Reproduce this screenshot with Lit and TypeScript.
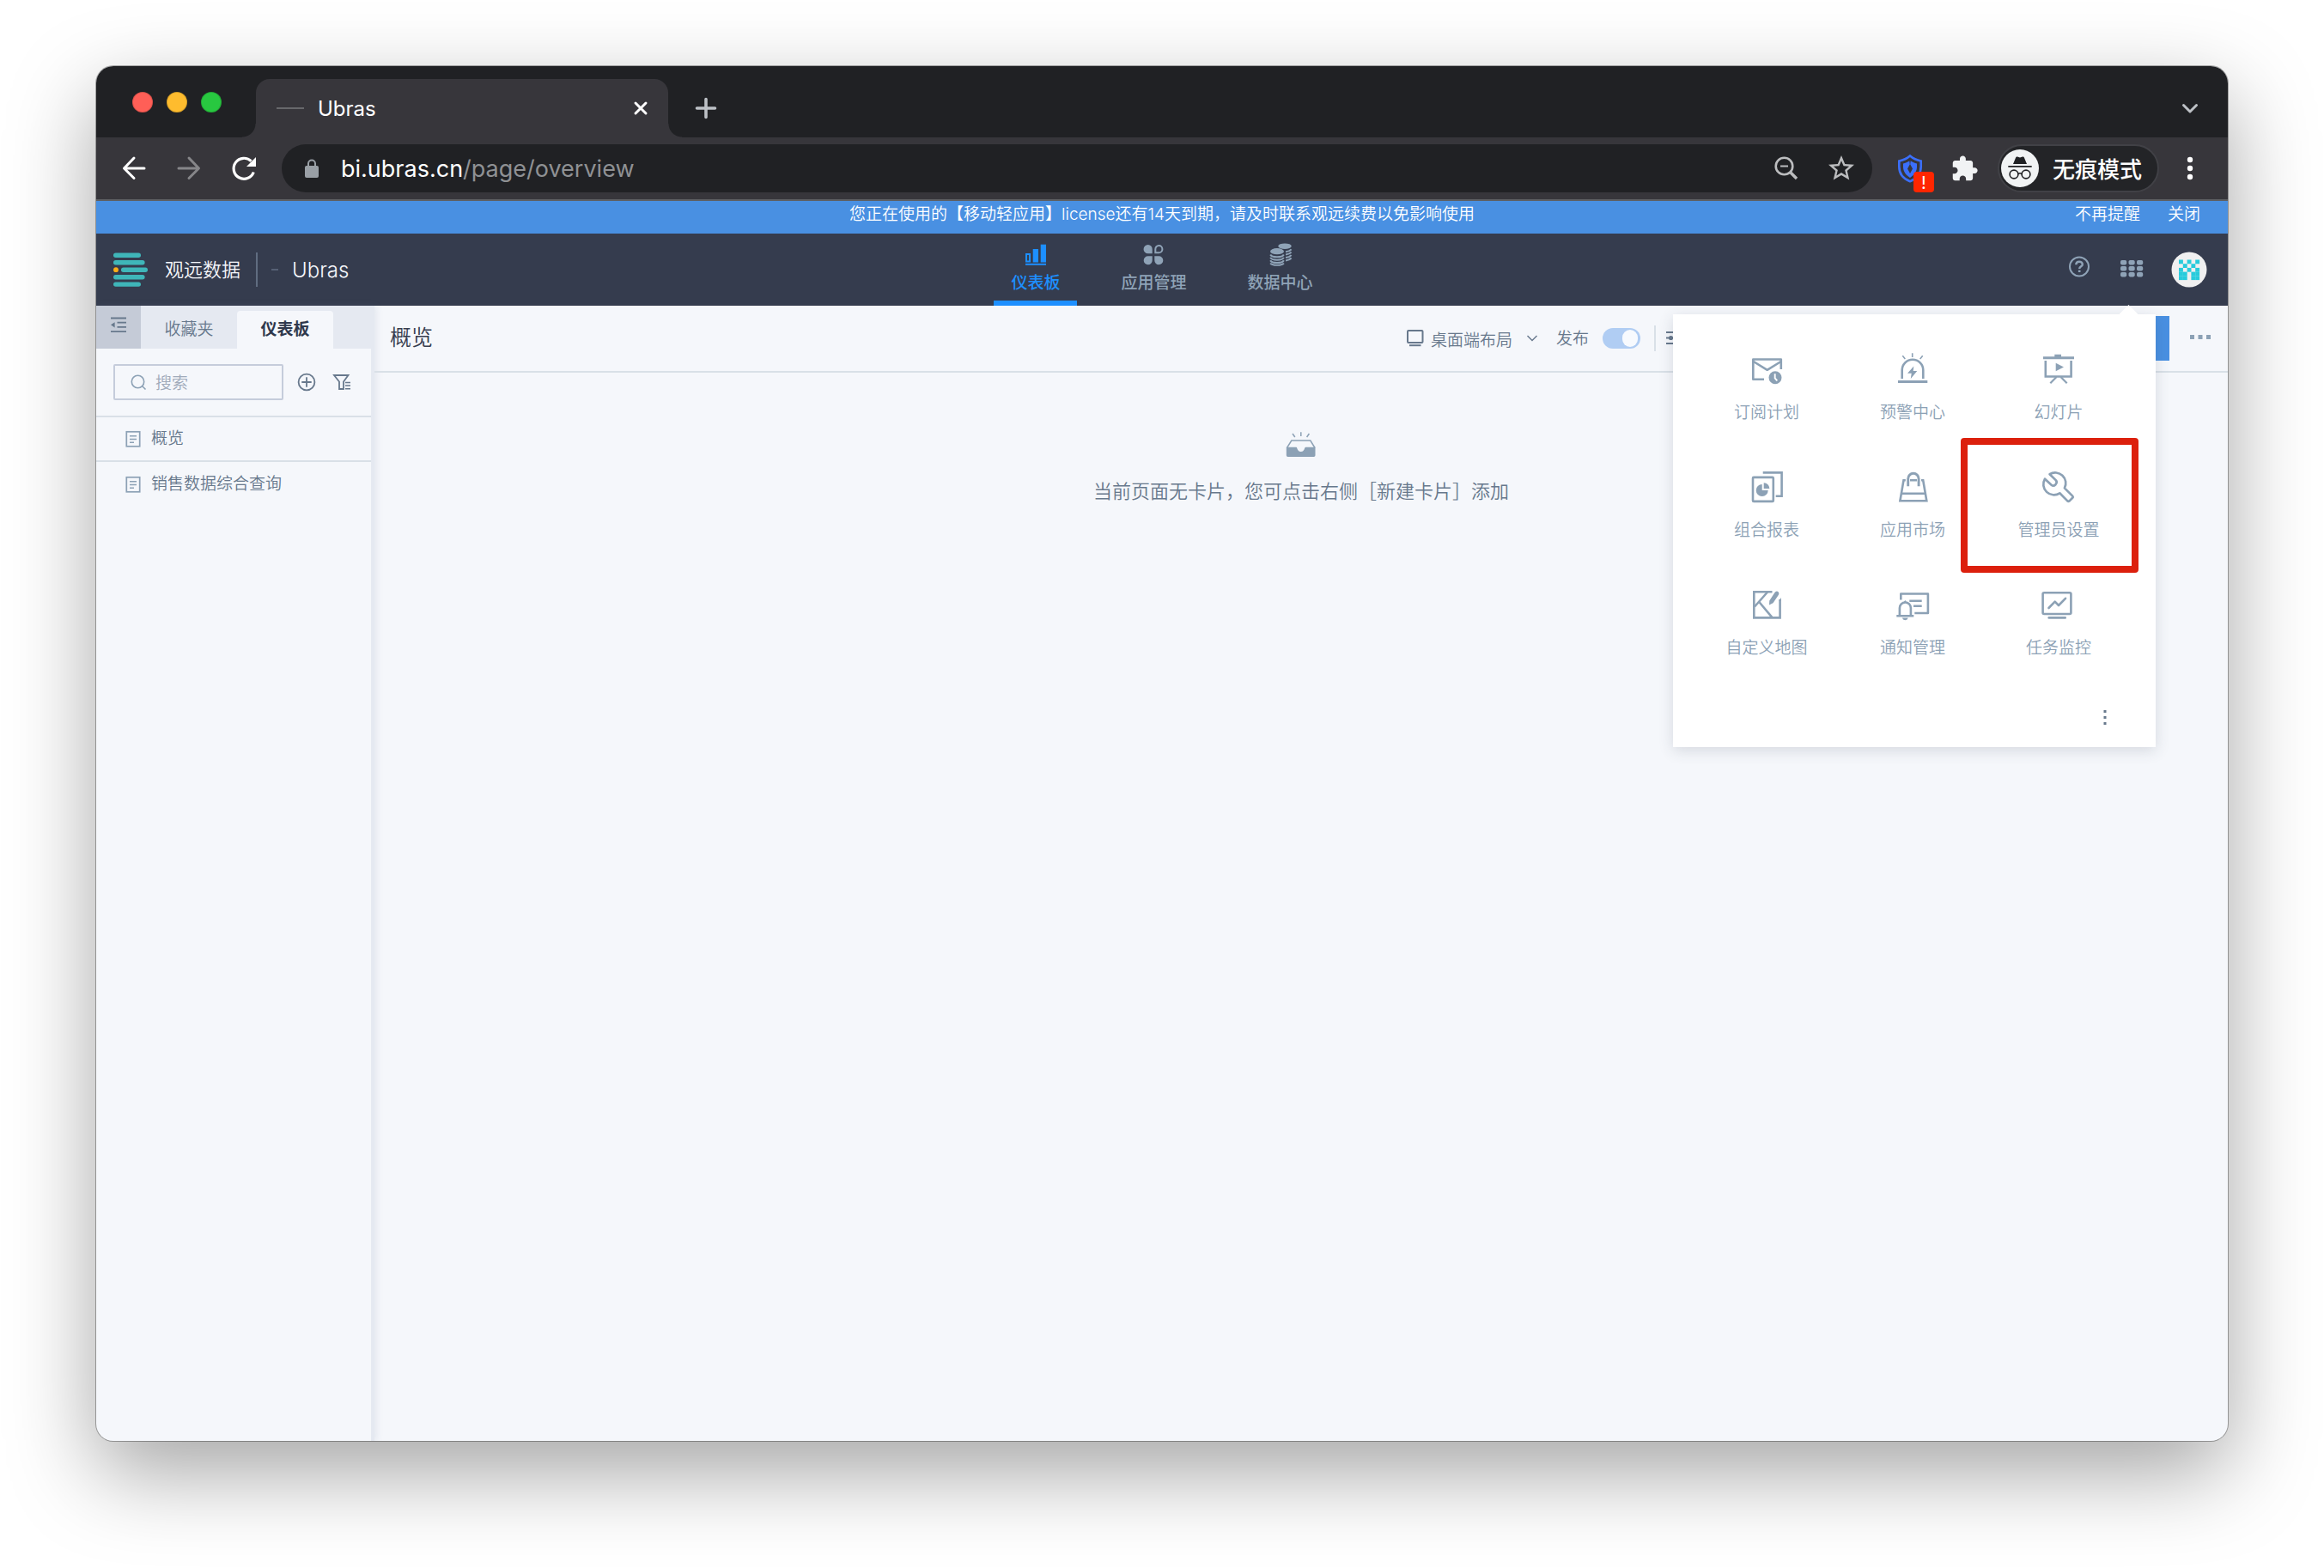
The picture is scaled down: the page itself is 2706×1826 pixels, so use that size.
import { LitElement, html, svg, css, nothing } from "lit";
import type { SVGTemplateResult } from "lit";
import { customElement, property } from "lit/decorators.js";
import { classMap } from "lit/directives/class-map.js";

/* ---------- icon library: name -> [box size, shapes] ---------- */
const icons: Record<string, [number, SVGTemplateResult]> = {
  back: [40, svg`<g fill="none" stroke="currentColor" stroke-width="3" stroke-linecap="round" stroke-linejoin="round"><path d="M32 20H9M20 8L8.500 20L20 31.500"/></g>`],
  forward: [40, svg`<g fill="none" stroke="currentColor" stroke-width="3" stroke-linecap="round" stroke-linejoin="round"><path d="M8 20H31M20 8L31.500 20L20 31.500"/></g>`],
  reload: [40, svg`<path fill="none" stroke="currentColor" stroke-width="3.200" d="M31.300 24.500A12 12 0 1 1 28.500 11.700"/><path fill="currentColor" d="M34 7V18H23Z"/>`],
  lock: [24, svg`<rect x="4" y="9" width="16" height="14" rx="2" fill="currentColor"/><path d="M8 9V6.500a4 4 0 0 1 8 0V9" fill="none" stroke="currentColor" stroke-width="2"/>`],
  zoomOut: [36, svg`<g fill="none" stroke="currentColor"><circle cx="15.500" cy="15.500" r="9.800" stroke-width="2.600"/><path d="M22.700 22.700L30 30" stroke-width="3.400"/><path d="M11 15.500H20" stroke-width="2"/></g>`],
  star: [24, svg`<path fill="currentColor" d="M22 9.240l-7.190-.62L12 2 9.190 8.630 2 9.240l5.460 4.730L5.820 21 12 17.270 18.180 21l-1.630-7.030L22 9.240zM12 15.400l-3.760 2.270 1-4.280-3.320-2.880 4.380-.38L12 6.100l1.710 4.040 4.380.38-3.320 2.880 1 4.280L12 15.400z"/>`],
  shield: [40, svg`<path d="M20 5.500C16 9 11 10.800 7.300 11.500V18C7.300 27 13 32.500 20 35.200C27 32.500 32.700 27 32.700 18V11.500C29 10.800 24 9 20 5.500Z" fill="none" stroke="currentColor" stroke-width="2.600"/><path d="M20 11C17 13 14.500 14 12 14.500V18.500C12 24 15.500 28 20 31C24.500 28 28 24 28 18.500V14.500C25.500 14 23 13 20 11Z" fill="currentColor"/><path d="M20 15L23 20.500L20 26L17 20.500ZM19 9H21L20 17Z" fill="#37363b"/>`],
  puzzle: [24, svg`<path fill="currentColor" d="M20.500 11H19V7c0-1.100-.9-2-2-2h-4V3.500C13 2.120 11.880 1 10.500 1S8 2.120 8 3.500V5H4c-1.100 0-1.990.9-1.990 2v3.800H3.500c1.490 0 2.700 1.210 2.700 2.700s-1.210 2.700-2.700 2.700H2V20c0 1.100.9 2 2 2h3.800v-1.500c0-1.490 1.210-2.700 2.700-2.700 1.490 0 2.700 1.210 2.700 2.700V22H17c1.100 0 2-.9 2-2v-4h1.500c1.380 0 2.500-1.120 2.500-2.500S21.880 11 20.500 11z"/>`],
  incognito: [44, svg`<circle cx="22" cy="22" r="22" fill="#f1f3f4"/><path fill="#202124" d="M14 17L17.200 9.200Q17.800 8 19 8.600L22 9.600L25 8.600Q26.200 8 26.800 9.200L30 17Z"/><g fill="none" stroke="#202124"><path d="M8.300 19.800H35.700" stroke-width="1.800"/><circle cx="15" cy="29" r="4.900" stroke-width="1.600"/><circle cx="29" cy="29" r="4.900" stroke-width="1.600"/><path d="M19.800 28.600Q22 27 24.200 28.600" stroke-width="1.600"/></g>`],
  kebab: [40, svg`<g fill="currentColor"><circle cx="20" cy="10" r="3.200"/><circle cx="20" cy="20" r="3.200"/><circle cx="20" cy="30" r="3.200"/></g>`],
  close: [32, svg`<path d="M10 10L22 22M22 10L10 22" stroke="currentColor" stroke-width="3" stroke-linecap="round"/>`],
  plus: [32, svg`<path d="M16 5.500V26.500M5.500 16H26.500" stroke="currentColor" stroke-width="3.600" stroke-linecap="round"/>`],
  chevron: [32, svg`<path d="M8.500 12.500L16 20L23.500 12.500" fill="none" stroke="currentColor" stroke-width="3" stroke-linecap="round" stroke-linejoin="round"/>`],
  logo: [40, svg`<g fill="#3fb6b9"><rect y="0.500" width="32" height="5.400" rx="2.700"/><rect y="9" width="36.600" height="5.400" rx="2.700"/><rect x="9" y="17.500" width="31" height="5.400" rx="2.700"/><rect y="26" width="36.600" height="5.400" rx="2.700"/><rect y="34.400" width="32" height="5.400" rx="2.700"/></g><circle cx="3" cy="20.200" r="2.900" fill="#fbae17"/>`],
  bars: [28, svg`<g fill="currentColor"><rect x="19.700" y="2.700" width="6.300" height="20.800"/><rect x="10.700" y="8" width="6.300" height="15.500"/><path d="M2 13H8V23.500H2ZM4 15V21.500H6V15Z" fill-rule="evenodd"/><rect x="2" y="24.800" width="24" height="2"/></g>`],
  clover: [28, svg`<g fill="currentColor"><path d="M7.700 3a5 5 0 0 1 5 5.200V13.300H7.700A5.100 5.100 0 0 1 7.700 3Z"/><path d="M7.700 26.300a5 5 0 0 0 5-5.200V16.300H7.700A5 5 0 0 0 7.700 26.300Z"/><path d="M20.300 26.300a5 5 0 0 1-5-5.200V16.300H20.300A5 5 0 0 1 20.300 26.300Z"/></g><path d="M20.300 4.100a4 4 0 0 0-4 4.100V12.300H20.300A4.100 4.100 0 0 0 20.300 4.100Z" fill="none" stroke="currentColor" stroke-width="2"/>`],
  coins: [28, svg`<g fill="currentColor"><ellipse cx="19" cy="4.700" rx="7.700" ry="3.300"/><ellipse cx="10" cy="10.700" rx="8" ry="3.600"/></g><g fill="none" stroke="currentColor" stroke-width="2"><path d="M2.200 14.500C4 18.200 16 18.200 17.800 14.500M2.200 17.900C4 21.600 16 21.600 17.800 17.900M2.200 21.300C4 25 16 25 17.800 21.300M2.200 24.500C4 27.600 16 27.600 17.800 24.500"/><path d="M20 11.200Q24.500 10.800 26.600 8.300M20 14.600Q24.500 14.200 26.600 11.700M20 18Q24.500 17.600 26.600 15.100M20 21.400Q24.500 21 26.600 18.500"/></g>`],
  help: [32, svg`<circle cx="15" cy="12.500" r="11" fill="none" stroke="currentColor" stroke-width="2"/><path d="M11.300 10.200C11.300 5.600 18.800 5.600 18.800 10C18.800 12.300 15.200 12.400 15.200 15" fill="none" stroke="currentColor" stroke-width="2.400"/><rect x="13.900" y="16.600" width="2.600" height="2.400" fill="currentColor"/>`],
  grid: [32, svg`<g fill="currentColor">${[0, 1, 2].map(r => [0, 1, 2].map(c => svg`<rect x=${3 + c * 9.500} y=${5 + r * 7} width="7.200" height="5.400" rx="1.800"/>`))}</g>`],
  avatar: [42, svg`<circle cx="21" cy="21" r="20.500" fill="#f0f0f0"/><g fill="#27cbdc">${["10101", "01010", "10101", "11011", "11011"].map((row, r) => [...row].map((v, c) => v === "1" ? svg`<rect x=${9 + c * 4.800} y=${9.500 + r * 4.700} width="4.900" height="4.800"/>` : nothing))}</g>`],
  fold: [24, svg`<g stroke="currentColor" stroke-width="1.800"><path d="M3 3.500H21M10.500 8.700H21M10.500 13.900H21M3 19.100H21"/></g><path d="M3 11.300L7.600 8.200V14.400Z" fill="currentColor"/>`],
  search: [20, svg`<g fill="none" stroke="currentColor" stroke-width="1.600"><circle cx="9.500" cy="9.500" r="7.200"/><path d="M14.700 14.700L18.500 18.500"/></g>`],
  add: [28, svg`<g fill="none" stroke="currentColor" stroke-width="1.800"><circle cx="14" cy="14" r="9.400"/><path d="M14 8.300V19.700M8.300 14H19.700"/></g>`],
  filter: [28, svg`<g fill="none" stroke="currentColor" stroke-width="1.800"><path d="M5 6H21.500L16 13.500V22H11V13.500Z"/><path d="M18 14.500H24M18 18H24M18 21.700H24" stroke-width="1.500"/></g>`],
  page: [22, svg`<g fill="none" stroke="currentColor" stroke-width="1.700"><rect x="3.300" y="2.800" width="15.400" height="17"/><path d="M7 7.700H15M7 11.500H15M7 15.200H12" stroke-width="1.500"/></g>`],
  desktop: [24, svg`<rect x="3" y="3" width="17.500" height="14" rx="1" fill="none" stroke="currentColor" stroke-width="2"/><path d="M5 20.200H18.500" stroke="currentColor" stroke-width="2"/>`],
  down: [16, svg`<path d="M2.500 5L8 10.500L13.500 5" fill="none" stroke="currentColor" stroke-width="1.400"/>`],
  sliders: [24, svg`<g stroke="currentColor" stroke-width="2"><path d="M0 5H24M0 11.500H24M0 18H24"/></g><circle cx="5.500" cy="11.500" r="2.600" fill="currentColor"/>`],
  more: [24, svg`<g fill="currentColor"><rect x="0" y="8" width="5" height="5"/><rect x="9.500" y="8" width="5" height="5"/><rect x="19" y="8" width="5" height="5"/></g>`],
  inbox: [40, svg`<g fill="none" stroke="currentColor" stroke-width="1.500"><path d="M10 7L12.800 11M19.800 5.300V10M29.400 7L26.600 11"/><path d="M3.500 23.500L8.800 15H30.800L36 23.500"/></g><path fill="currentColor" d="M2.800 22.700H14.300C15.700 22.700 15.300 28 19.700 28C24.200 28 23.700 22.700 25.200 22.700H36.500V32.200Q36.500 34 34.700 34H4.600Q2.800 34 2.800 32.200Z"/>`],
  dots: [28, svg`<g fill="currentColor"><rect x="12.500" y="6" width="3" height="3"/><rect x="12.500" y="13" width="3" height="3"/><rect x="12.500" y="20" width="3" height="3"/></g>`],
  mail: [40, svg`<g fill="none" stroke="currentColor" stroke-width="2.600" stroke-linejoin="round"><path d="M36.800 20V8.500H4.300V31.700H17"/><path d="M4.700 11L20.700 20.800L36.700 11"/></g><circle cx="30" cy="29.700" r="7.500" fill="currentColor"/><path d="M29.700 25.300V30.300L32.300 33.300" fill="none" stroke="#fff" stroke-width="1.900"/>`],
  alarm: [40, svg`<g fill="none" stroke="currentColor" stroke-width="2.600"><path d="M7.700 31V21A12.300 12.300 0 0 1 32.300 21V31"/><path d="M3 34.400H37.300" stroke-width="3"/><path d="M19.700 1.300V6M8.300 4.300L11.300 8M31.700 4.300L28.700 8" stroke-width="1.600"/></g><path fill="currentColor" d="M21.300 16.500L14 24.800H18.700L17.800 31L25.300 22H20.700Z"/>`],
  slides: [40, svg`<g fill="none" stroke="currentColor" stroke-width="2.600"><path d="M2 6.700H38" stroke-width="3"/><path d="M4.800 10V28.500H34.600V10"/><path d="M17.500 29L10.300 36.300M22.500 29L29.700 36.300" stroke-width="2.200"/></g><path d="M15.300 2.700H23V6H15.300ZM16.700 12.700L26 17.400L16.700 22.300Z" fill="currentColor"/>`],
  report: [40, svg`<g fill="none" stroke="currentColor" stroke-width="2.600"><rect x="4" y="8.900" width="23.800" height="28" rx="1"/><path d="M15.700 3.400H37.600V30.700H30.700"/></g><path fill="currentColor" d="M14.700 17a7 7 0 1 0 7 7h-7zM16.700 15.300v6.700h6.700a6.700 6.700 0 0 0-6.700-6.700z"/>`],
  bag: [40, svg`<g fill="none" stroke="currentColor" stroke-width="2.600"><path d="M11.800 12.300H9.500L5.400 36.300H36.300L32.200 12.300H30"/><path d="M6.800 27.700H35M17 12.300H25"/><path d="M14.700 19.300V10.500A6.200 6.200 0 0 1 27.100 10.500V19.300" stroke-width="2.900"/></g>`],
  wrench: [40, svg`<path fill="none" stroke="currentColor" stroke-width="2.700" stroke-linejoin="round" d="M9.600 5.200A12.300 12.300 0 0 1 26.900 21.400L36.200 30.600Q37.200 31.700 36.200 32.800L32.600 36.400Q31.400 37.300 30.300 36.400L21.300 27.300A12.300 12.300 0 0 1 4 10.700L11.600 17.700Q14 19.700 16.500 17.200Q18.700 14.700 16.900 12.400Z"/>`],
  map: [40, svg`<g fill="none" stroke="currentColor" stroke-width="2.600"><path d="M26.500 5.300H5.300V35.400H35.600V14"/><path d="M21 5.500L6 22.500M11.300 17L26.500 35.200"/></g><path fill="currentColor" d="M34.200 15.500L36.900 12V16ZM29.300 6.200Q31.300 3.500 33.800 5.400Q35 6.800 33.900 8.700L27.500 18.200L23 20.500L23.300 15.400Z"/>`],
  notice: [40, svg`<g fill="none" stroke="currentColor" stroke-width="2.600" stroke-linejoin="round"><path d="M6.300 14.500V7.500H37.900V30H22.300"/><path d="M16.300 15.700H30.700M21 21.700H30.700"/><path d="M4.900 32V24A6.500 6.500 0 0 1 17.900 24V32M1.300 33.300H21.300"/></g><path fill="currentColor" d="M9 18L11.300 15L13.600 18ZM7.900 35.600H14.700Q14.300 38 11.300 38.300Q8.300 38 7.900 35.600Z"/>`],
  monitor: [40, svg`<g fill="none" stroke="currentColor" stroke-width="2.600" stroke-linecap="round" stroke-linejoin="round"><rect x="1.600" y="6.200" width="32.800" height="24.800" rx="1.500"/><path d="M8.700 35.400H27.700"/><path d="M8.500 24L15.700 16.700L20 21L28 12.800"/></g>`],
};

/* One glyph of the icon library, drawn in the current text colour. */
@customElement("ui-icon")
export class UiIcon extends LitElement {
  @property() name = "";
  @property({ type: Number }) size = 0;

  static styles = css`
    :host { display: inline-flex; flex: none; }
    svg { display: block; }
  `;

  render() {
    const [box, shapes] = icons[this.name];
    const size = this.size || box;
    return html`<svg width=${size} height=${size} viewBox="0 0 ${box} ${box}" aria-hidden="true">${shapes}</svg>`;
  }
}

const reset = css`
  :host, * { box-sizing: border-box; }
  button, input, select {
    font: inherit; color: inherit; background: none; border: 0; margin: 0; padding: 0;
    appearance: none; outline: none;
  }
  button { display: inline-flex; align-items: center; justify-content: center; cursor: pointer; }
  a { color: inherit; text-decoration: none; }
  h1, p, ul { margin: 0; padding: 0; font-weight: inherit; list-style: none; }
`;

/* Tab strip and address bar of the browser window. */
@customElement("browser-chrome")
export class BrowserChrome extends LitElement {
  static styles = [reset, css`
    :host { display: block; color: #fff; font-family: Inter, "Noto Sans CJK SC", sans-serif; font-weight: 400; }
    .strip { display: flex; align-items: center; height: 83px; padding: 0 28px 0 42px; background: #202124; }
    .lights { display: flex; gap: 16px; margin-right: 40px; }
    .light { width: 24px; height: 24px; border-radius: 50%; background: #ff5f57; box-shadow: inset 0 0 0 1px rgba(0, 0, 0, 0.15); }
    .light.min { background: #febc2e; }
    .light.max { background: #28c840; }
    .tab {
      position: relative; align-self: flex-end; display: flex; align-items: center;
      width: 480px; height: 68px; padding: 0 16px 0 24px; border-radius: 16px 16px 0 0; background: #37363b;
    }
    .tab::before, .tab::after { content: ""; position: absolute; bottom: 0; width: 16px; height: 16px; }
    .tab::before { left: -16px; background: radial-gradient(circle at 0 0, transparent 15px, #37363b 16px); }
    .tab::after { right: -16px; background: radial-gradient(circle at 100% 0, transparent 15px, #37363b 16px); }
    .favicon { width: 32px; height: 2px; margin-right: 16px; background: #67686b; }
    .title { flex: 1; font-size: 24px; }
    .new { margin: 14px auto 0 28px; color: #bdc1c6; }
    .list { margin-top: 14px; color: #bdc1c6; }
    .bar {
      display: flex; align-items: center; height: 74px; padding: 0 24px;
      background: #37363b; border-bottom: 2px solid #5e5f62;
    }
    .nav { display: flex; gap: 24px; margin-right: 24px; }
    .nav .off { color: #868689; }
    .omnibox {
      flex: 1; display: flex; align-items: center; height: 56px; padding: 0 18px 0 23px;
      border-radius: 28px; background: #202124; color: #bcbdbf;
    }
    .lock { color: #9aa0a6; margin-right: 22px; }
    .url { flex: 1; font-size: 27px; color: #8f9194; }
    .host { color: #fff; }
    .find { display: flex; gap: 28px; }
    .shield { position: relative; margin-left: 24px; color: #3b6ffb; }
    .badge {
      position: absolute; right: -8px; bottom: -8px; width: 24px; height: 24px; border-radius: 4px;
      background: #ff2600; color: #fff; font-size: 20px; line-height: 26px; text-align: center;
    }
    .ext { width: 40px; height: 40px; margin-left: 24px; color: #f1f3f4; }
    .pill {
      display: flex; align-items: center; gap: 16px; height: 56px; margin: 0 16px 0 18px; padding: 0 18px 0 2px;
      border: 2px solid #414146; border-radius: 28px; background: #232427; font-size: 26px; font-weight: 500;
    }
    .mode { padding-bottom: 2px; }
  `];

  render() {
    return html`
      <div class="strip">
        <div class="lights"><span class="light"></span><span class="light min"></span><span class="light max"></span></div>
        <div class="tab">
          <span class="favicon"></span>
          <span class="title">Ubras</span>
          <button aria-label="Close tab"><ui-icon name="close"></ui-icon></button>
        </div>
        <button class="new" aria-label="New tab"><ui-icon name="plus"></ui-icon></button>
        <button class="list" aria-label="Tabs"><ui-icon name="chevron"></ui-icon></button>
      </div>
      <div class="bar">
        <div class="nav">
          <button aria-label="Back"><ui-icon name="back"></ui-icon></button>
          <button class="off" aria-label="Forward"><ui-icon name="forward"></ui-icon></button>
          <button aria-label="Reload"><ui-icon name="reload"></ui-icon></button>
        </div>
        <div class="omnibox">
          <ui-icon class="lock" name="lock"></ui-icon>
          <span class="url"><span class="host">bi.ubras.cn</span>/page/overview</span>
          <div class="find">
            <button aria-label="Zoom"><ui-icon name="zoomOut"></ui-icon></button>
            <button aria-label="Bookmark"><ui-icon name="star" size="36"></ui-icon></button>
          </div>
        </div>
        <button class="shield" aria-label="Shield"><ui-icon name="shield"></ui-icon><span class="badge">!</span></button>
        <button class="ext" aria-label="Extensions"><ui-icon name="puzzle" size="33"></ui-icon></button>
        <button class="pill"><ui-icon name="incognito"></ui-icon><span class="mode">无痕模式</span></button>
        <button aria-label="Menu"><ui-icon name="kebab"></ui-icon></button>
      </div>`;
  }
}

/* Licence notice and the product's main navigation. */
@customElement("app-header")
export class AppHeader extends LitElement {
  private items = [
    { icon: "bars", label: "仪表板", active: true },
    { icon: "clover", label: "应用管理", active: false },
    { icon: "coins", label: "数据中心", active: false },
  ];

  static styles = [reset, css`
    :host { display: block; font-size: 19px; font-family: Inter, "Noto Sans CJK SC", sans-serif; }
    .notice, .head { display: grid; grid-template-columns: 1fr auto 1fr; align-items: center; }
    .notice { height: 38px; padding: 0 32px 6px; background: #4990e2; color: #fff; line-height: 28px; }
    .notice p { grid-column: 2; }
    .links { display: flex; justify-content: flex-end; gap: 32px; }
    .head { height: 84px; padding: 0 20px; background: #353c4e; color: #8fa3b7; }
    .brand { display: flex; align-items: center; font-size: 22px; color: #f5f7fb; }
    .name { margin-left: 20px; padding-bottom: 4px; }
    .rule { width: 2px; height: 40px; margin: 0 16px 0 18px; background: #606d81; }
    .dash { width: 8px; height: 2px; margin-right: 16px; background: #566075; }
    .latin { font-size: 24px; font-weight: 300; }
    .menu { display: flex; gap: 31px; }
    .item {
      display: flex; flex-direction: column; align-items: center; gap: 7px; height: 84px;
      padding: 10px 20px 0; line-height: 26px; font-weight: 500;
    }
    .item.active { color: #1d8fff; box-shadow: inset 0 -6px #1d8fff; }
    .tools { display: flex; justify-content: flex-end; align-items: center; gap: 28px; padding-right: 4px; }
    .user { margin-left: 2px; }
  `];

  render() {
    return html`
      <div class="notice">
        <p>您正在使用的【移动轻应用】license还有14天到期，请及时联系观远续费以免影响使用</p>
        <div class="links"><button>不再提醒</button><button>关闭</button></div>
      </div>
      <header class="head">
        <div class="brand">
          <ui-icon name="logo"></ui-icon><span class="name">观远数据</span>
          <span class="rule"></span><span class="dash"></span><span class="latin">Ubras</span>
        </div>
        <nav class="menu">
          ${this.items.map(i => html`<a href="#" class=${classMap({ item: true, active: i.active })}><ui-icon name=${i.icon}></ui-icon>${i.label}</a>`)}
        </nav>
        <div class="tools">
          <button aria-label="帮助"><ui-icon name="help"></ui-icon></button>
          <button aria-label="应用"><ui-icon name="grid"></ui-icon></button>
          <button class="user" aria-label="账户"><ui-icon name="avatar"></ui-icon></button>
        </div>
      </header>`;
  }
}

/* Page tree at the left. */
@customElement("page-sidebar")
export class PageSidebar extends LitElement {
  private pages = ["概览", "销售数据综合查询"];

  static styles = [reset, css`
    :host {
      display: block; flex: none; width: 324px; border-right: 4px solid #e5e9f1;
      box-shadow: 2px 0 8px rgba(90, 110, 140, 0.12); font-size: 19px; color: #67788c;
    }
    .tabs { display: flex; align-items: flex-end; height: 50px; background: #e5e9f1; }
    .fold { width: 52px; height: 50px; padding-bottom: 4px; background: #c5cbd7; }
    .tab { width: 112px; height: 44px; padding-bottom: 6px; border-radius: 4px 4px 0 0; }
    .tab.active { background: #f5f7fb; color: #2f384c; font-weight: 700; }
    .tools { display: flex; align-items: center; gap: 13px; padding: 18px 20px; border-bottom: 2px solid #d9e0e7; }
    .search {
      display: flex; align-items: center; gap: 10px; width: 198px; height: 42px; padding-left: 17px;
      border: 2px solid #c5ccdb; border-radius: 2px; color: #8ca1b5;
    }
    .field { flex: 1; min-width: 0; padding-bottom: 2px; }
    .field::placeholder { color: #a0aaba; opacity: 1; }
    .item { display: flex; height: 52px; }
    .item:first-child { border-bottom: 2px solid #d9e0e7; }
    .page { flex: 1; display: flex; align-items: center; gap: 10px; padding-left: 32px; }
    .doc { color: #8ca1b5; }
    .label { padding-bottom: 6px; }
  `];

  render() {
    return html`
      <div class="tabs">
        <button class="fold" aria-label="收起"><ui-icon name="fold"></ui-icon></button>
        <button class="tab">收藏夹</button>
        <button class="tab active">仪表板</button>
      </div>
      <div class="tools">
        <label class="search"><ui-icon name="search"></ui-icon><input class="field" type="text" placeholder="搜索" aria-label="搜索"></label>
        <button aria-label="新建"><ui-icon name="add"></ui-icon></button>
        <button aria-label="筛选"><ui-icon name="filter"></ui-icon></button>
      </div>
      <ul>
        ${this.pages.map(p => html`<li class="item"><a class="page" href="#"><ui-icon class="doc" name="page"></ui-icon><span class="label">${p}</span></a></li>`)}
      </ul>`;
  }
}

/* Launcher that opens under the grid button. */
@customElement("app-launcher")
export class AppLauncher extends LitElement {
  private apps = [
    ["mail", "订阅计划"], ["alarm", "预警中心"], ["slides", "幻灯片"],
    ["report", "组合报表"], ["bag", "应用市场"], ["wrench", "管理员设置"],
    ["map", "自定义地图"], ["notice", "通知管理"], ["monitor", "任务监控"],
  ];

  static styles = [reset, css`
    :host {
      position: absolute; top: 10px; right: 84px; display: flex; flex-direction: column;
      width: 562px; height: 504px; padding: 44px 28px 21px 24px; background: #fff;
      box-shadow: 0 4px 16px rgba(50, 60, 80, 0.16); color: #8ca1b5; font-size: 19px;
    }
    .arrow { position: absolute; top: -8px; right: 24px; width: 15px; height: 15px; background: #fff; transform: rotate(45deg); }
    .grid { display: grid; grid-template-columns: repeat(3, 1fr); row-gap: 54px; }
    .app { display: flex; flex-direction: column; align-items: center; gap: 15px; line-height: 28px; }
    .mark { position: absolute; top: 144px; right: 20px; width: 207px; height: 157px; border: 8px solid #dc200d; border-radius: 4px; pointer-events: none; }
    .more { align-self: flex-end; margin: auto 17px 0 0; color: #67788c; }
  `];

  render() {
    return html`
      <span class="arrow"></span>
      <div class="grid">
        ${this.apps.map(([icon, label]) => html`<a class="app" href="#"><ui-icon name=${icon}></ui-icon>${label}</a>`)}
      </div>
      <span class="mark"></span>
      <button class="more" aria-label="更多"><ui-icon name="dots"></ui-icon></button>`;
  }
}

/* Selected dashboard: toolbar and empty state. */
@customElement("dashboard-view")
export class DashboardView extends LitElement {
  static styles = [reset, css`
    :host { display: block; flex: 1; min-width: 0; color: #67788c; }
    .bar { display: flex; align-items: center; height: 78px; padding: 0 20px 0 18px; border-bottom: 2px solid #d9e0e7; font-size: 19px; }
    .title { flex: 1; padding-bottom: 6px; font-size: 25px; color: #353c4e; }
    .layout { display: flex; align-items: center; gap: 6px; }
    .pick { width: 126px; padding: 0; }
    .caret { margin-left: -22px; pointer-events: none; }
    .publish { display: flex; align-items: center; gap: 16px; margin: 0 16px 0 20px; }
    .text { padding-bottom: 4px; }
    .switch { display: flex; align-items: center; justify-content: flex-end; width: 44px; height: 24px; padding-right: 3px; border-radius: 12px; background: #b0cdf3; }
    .switch::before { content: ""; width: 18px; height: 20px; border-radius: 9px; background: #f7fafe; }
    .actions { display: flex; align-items: center; justify-content: space-between; width: 598px; margin-right: 24px; padding-left: 12px; }
    .rule { width: 2px; height: 30px; background: #d9e0e7; }
    .create { width: 160px; height: 52px; background: #4990e2; }
    .more { color: #8ca1b5; }
    .empty { display: flex; flex-direction: column; align-items: center; gap: 16px; padding-top: 64px; font-size: 22px; line-height: 32px; }
    .tray { color: #8ca1b5; }
  `];

  render() {
    return html`
      <div class="bar">
        <h1 class="title">概览</h1>
        <label class="layout">
          <ui-icon name="desktop"></ui-icon>
          <select class="pick" aria-label="布局"><option>桌面端布局</option></select>
          <ui-icon class="caret" name="down"></ui-icon>
        </label>
        <label class="publish"><span class="text">发布</span><input class="switch" type="checkbox" checked></label>
        <span class="rule"></span>
        <div class="actions">
          <button aria-label="设置"><ui-icon name="sliders"></ui-icon></button>
          <button class="create" aria-label="新建卡片"></button>
        </div>
        <button class="more" aria-label="更多"><ui-icon name="more"></ui-icon></button>
      </div>
      <div class="empty">
        <ui-icon class="tray" name="inbox"></ui-icon>
        <p>当前页面无卡片，您可点击右侧［新建卡片］添加</p>
      </div>`;
  }
}

@customElement("app-root")
export class AppRoot extends LitElement {
  static styles = css`
    :host {
      display: flex; box-sizing: border-box; min-height: 100vh; padding: 77px 112px 148px; background: #fff;
      font-family: "Noto Sans CJK SC", "Noto Sans", sans-serif; font-weight: 350;
    }
    .window {
      flex: 1; min-width: 0; display: flex; flex-direction: column; overflow: hidden;
      border-radius: 20px; background: #f5f7fb;
      box-shadow: 0 0 0 1px rgba(0, 0, 0, 0.3), 0 36px 100px rgba(0, 0, 0, 0.36);
    }
    .workspace { position: relative; flex: 1; display: flex; }
  `;

  render() {
    return html`
      <div class="window">
        <browser-chrome></browser-chrome>
        <app-header></app-header>
        <div class="workspace">
          <page-sidebar></page-sidebar>
          <dashboard-view></dashboard-view>
          <app-launcher></app-launcher>
        </div>
      </div>`;
  }
}
